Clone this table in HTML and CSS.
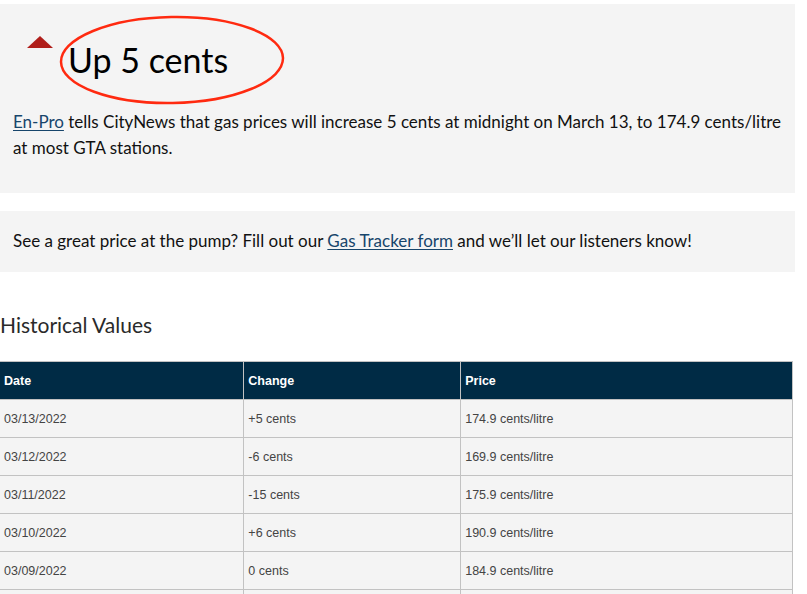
FILE: index.html
```html
<!DOCTYPE html>
<html>
<head>
<meta charset="utf-8">
<link rel="stylesheet" href="styles.css">
</head>
<body>
<section class="alert-box">
  <div class="headline">
    <span class="arrow-up"></span>
    <h2 class="headline-text">Up 5 cents</h2>
    <svg class="circle-mark" width="228" height="92" viewBox="0 0 228 92">
      <ellipse cx="113" cy="46" rx="111" ry="43" fill="none" stroke="#ff2a10" stroke-width="2.5" transform="rotate(-1 113 46)"/>
    </svg>
  </div>
  <p class="lead"><a href="#">En-Pro</a> tells CityNews that gas prices will increase 5 cents at midnight on March 13, to 174.9 cents/litre at most GTA stations.</p>
</section>
<section class="note-box">
  <p>See a great price at the pump? Fill out our <a href="#">Gas Tracker form</a> and we’ll let our listeners know!</p>
</section>
<h3 class="section-title">Historical Values</h3>
<table class="history">
  <colgroup><col class="c1"><col class="c2"><col class="c3"></colgroup>
  <thead>
    <tr><th>Date</th><th>Change</th><th>Price</th></tr>
  </thead>
  <tbody>
    <tr><td>03/13/2022</td><td>+5 cents</td><td>174.9 cents/litre</td></tr>
    <tr><td>03/12/2022</td><td>-6 cents</td><td>169.9 cents/litre</td></tr>
    <tr><td>03/11/2022</td><td>-15 cents</td><td>175.9 cents/litre</td></tr>
    <tr><td>03/10/2022</td><td>+6 cents</td><td>190.9 cents/litre</td></tr>
    <tr><td>03/09/2022</td><td>0 cents</td><td>184.9 cents/litre</td></tr>
    <tr class="partial"><td></td><td></td><td></td></tr>
  </tbody>
</table>
</body>
</html>
```
FILE: styles.css
```css
html, body {
  margin: 0;
  padding: 0;
  background: #fff;
  overflow: hidden;
}
body {
  font-family: Lato, "Open Sans", sans-serif;
  color: #111;
}
a {
  color: #17456b;
  text-decoration: underline;
  text-underline-offset: 2px;
}
.alert-box {
  margin-top: 4px;
  width: 795px;
  box-sizing: border-box;
  background: #f4f4f4;
  padding: 26px 13px 32px;
}
.headline {
  position: relative;
  display: flex;
  align-items: center;
  height: 60px;
}
.arrow-up {
  width: 0;
  height: 0;
  border-left: 13px solid transparent;
  border-right: 13px solid transparent;
  border-bottom: 12px solid #b01e1a;
  margin-left: 14px;
  margin-right: 15px;
  margin-top: -36px;
}
.headline-text {
  margin: 0;
  font-size: 34px;
  font-weight: 400;
  color: #000;
  line-height: 40px;
}
.circle-mark {
  position: absolute;
  left: 46px;
  top: -16px;
}
.lead {
  margin: 19px 0 0;
  font-size: 17px;
  line-height: 26px;
}
.note-box {
  margin-top: 18px;
  width: 795px;
  box-sizing: border-box;
  background: #f4f4f4;
  padding: 17px 13px 18px;
}
.note-box p {
  margin: 0;
  font-size: 17px;
  line-height: 26px;
}
.section-title {
  margin: 40px 0 0;
  font-size: 21px;
  font-weight: 400;
  color: #2a2a2a;
  line-height: 26px;
}
.history {
  margin-top: 23px;
  border-collapse: collapse;
  width: 793px;
  font-family: "Liberation Sans", Arial, sans-serif;
  font-size: 12.5px;
}
.history col.c1 { width: 244px; }
.history col.c2 { width: 217px; }
.history col.c3 { width: 332px; }
.history th, .history td {
  border: 1px solid #c2c2c2;
  height: 38px;
  padding: 0 4px;
  text-align: left;
  box-sizing: border-box;
}
.history tr > :first-child { border-left: none; }
.history th {
  background: #002b45;
  color: #fff;
  font-weight: 700;
}
.history td {
  background: #f4f4f4;
  color: #444;
}
```
